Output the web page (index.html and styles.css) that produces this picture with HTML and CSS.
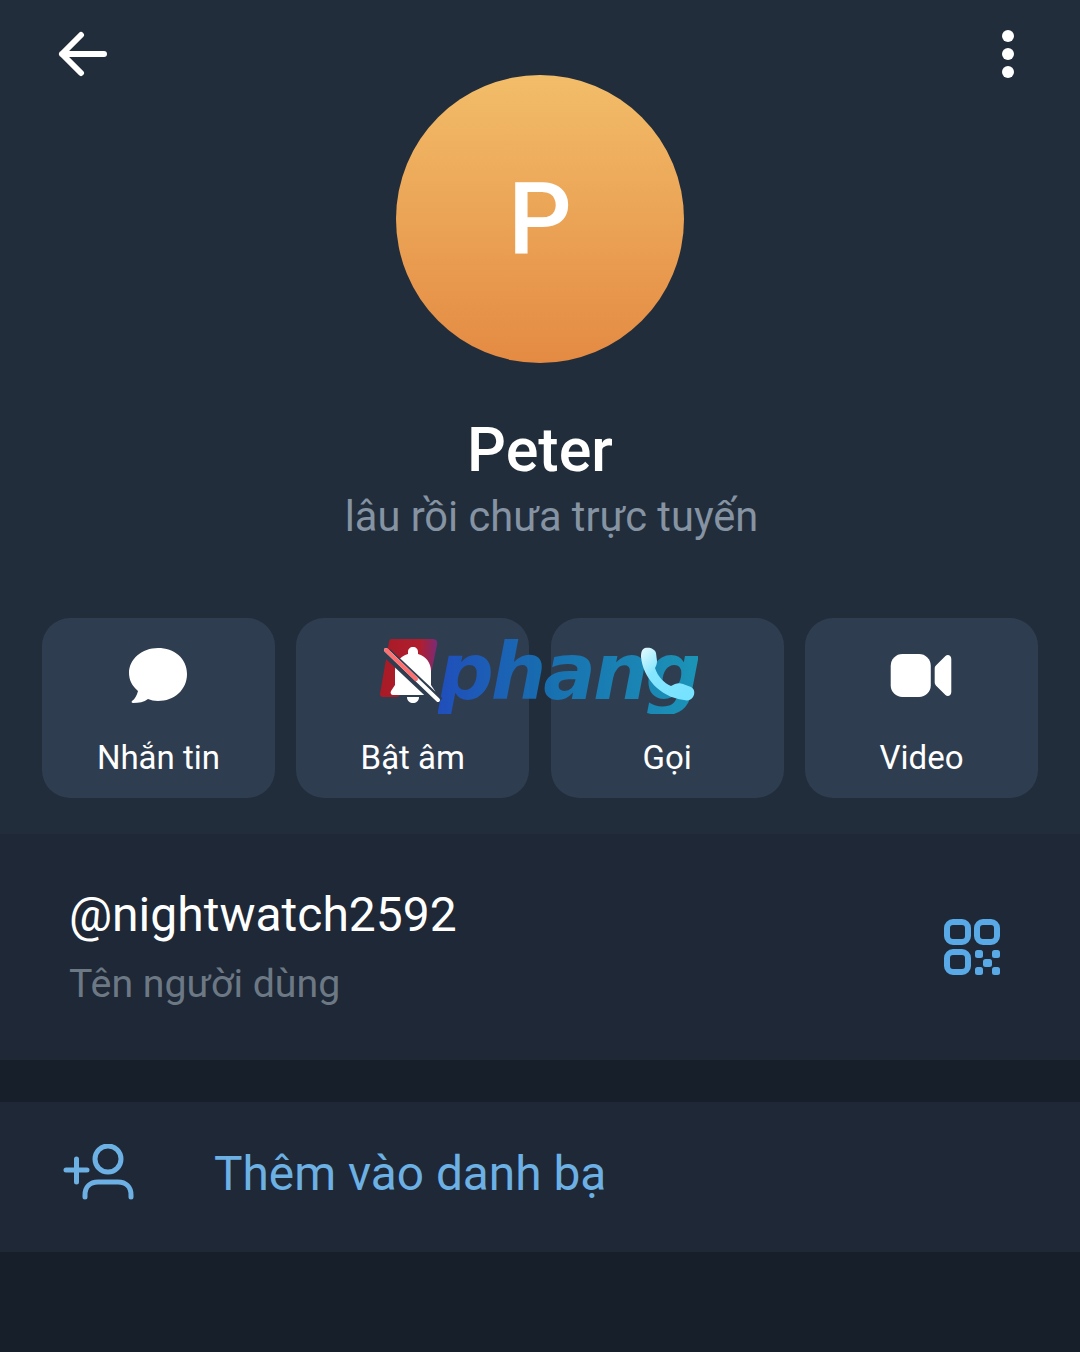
FILE: index.html
```html
<!DOCTYPE html>
<html lang="vi">
<head>
<meta charset="UTF-8">
<meta name="viewport" content="width=device-width, initial-scale=1.0">
<title>Peter</title>
<link rel="stylesheet" href="styles.css">
</head>
<body>

<div class="hero">
    <div class="topbar">
        <svg class="icon-back" width="50" height="48" viewBox="0 0 50 48" fill="none" stroke="#fff" stroke-width="6" stroke-linecap="round" stroke-linejoin="round">
            <path d="M46 24H4M23 5L4 24l19 19"/>
        </svg>
        <svg class="icon-more" width="14" height="50" viewBox="0 0 14 50" fill="#fff">
            <circle cx="7" cy="6" r="6"/>
            <circle cx="7" cy="24" r="6"/>
            <circle cx="7" cy="42" r="6"/>
        </svg>
    </div>
    <div class="avatar">P</div>
    <div class="name">Peter</div>
    <div class="status">lâu rồi chưa trực tuyến</div>
    <div class="actions">
        <div class="action">
            <svg width="60" height="56" viewBox="0 0 60 56" fill="#fff">
                <path d="M30 1C14 1 1 12 1 26c0 7 3 13 9 18-1 4-3 8-6 10-1 1 0 2 1 2 6 0 11-1 15-4 3 1 6 2 10 2 16 0 29-11 29-27S46 1 30 1z"/>
            </svg>
            <span class="action-label">Nhắn tin</span>
        </div>
        <div class="action">
            <svg width="60" height="60" viewBox="0 0 60 60" fill="#fff">
                <path d="M30 0c-3 0-5 2-5 5v2c-8 2-13 9-13 17v14l-4 6c-1 2 0 4 2 4h40c2 0 3-2 2-4l-4-6V24c0-8-5-15-13-17V5c0-3-2-5-5-5z"/>
                <path d="M24 50c0 4 3 6 6 6s6-2 6-6z"/>
                <path d="M4 6l52 49" stroke="#2f3d50" stroke-width="10"/>
                <path d="M3 3l52 50" stroke="#fff" stroke-width="4" stroke-linecap="round"/>
                <path d="M3 3l30 29" stroke="#ff6f6f" stroke-width="4" stroke-linecap="round"/>
            </svg>
            <span class="action-label">Bật âm</span>
        </div>
        <div class="action">
            <svg width="60" height="56" viewBox="0 0 60 56">
                <defs>
                    <linearGradient id="phone-fill" x1="0" y1="0" x2="1" y2="1">
                        <stop offset="0" stop-color="#e8fbff"/>
                        <stop offset="0.35" stop-color="#86e6ff"/>
                        <stop offset="1" stop-color="#74e2ff"/>
                    </linearGradient>
                </defs>
                <path fill="url(#phone-fill)" d="M8 1c5-1 10 1 11 5l1 8c0 3-1 5-2 7 3 9 9 15 16 18l4-2c3-1 5-1 8 0l8 3c4 2 4 7 2 10-2 3-5 4-9 3C22 50 6 30 4 10 4 5 5 2 8 1z"/>
            </svg>
            <span class="action-label">Gọi</span>
        </div>
        <div class="action">
            <svg class="icon-video" width="62" height="43" viewBox="0 0 62 44" fill="#fff">
                <rect x="0" y="0" width="41" height="44" rx="12"/>
                <path d="M45 15c0-2 1-3 2-4l9-9c2-2 6-1 6 3v34c0 4-4 5-6 3l-9-9c-1-1-2-2-2-4z"/>
            </svg>
            <span class="action-label">Video</span>
        </div>
    </div>
    <div class="watermark">
        <svg class="watermark-mark" width="58" height="60" viewBox="0 0 58 60">
            <defs>
                <linearGradient id="mark-fill" x1="0" y1="0" x2="1" y2="0">
                    <stop offset="0" stop-color="#a81a26"/>
                    <stop offset="0.7" stop-color="#b01e2e"/>
                    <stop offset="1" stop-color="#7a2a78"/>
                </linearGradient>
            </defs>
            <path fill="url(#mark-fill)" d="M12 1h40c4 0 6 2 5 6l-5 24c-1 3-3 5-7 5H24l-4 20c0 2-2 3-4 3H3c-2 0-3-1-3-3L9 4c0-2 1-3 3-3z"/>
        </svg>
        <span class="watermark-text">phang</span>
    </div>
</div>

<div class="section section-user">
    <div>
        <div class="username">@nightwatch2592</div>
        <div class="username-hint">Tên người dùng</div>
    </div>
    <svg class="icon-qr" width="56" height="56" viewBox="0 0 56 56" fill="none" stroke="#58a9e6" stroke-width="6">
        <rect x="3" y="3" width="21" height="20" rx="6"/>
        <rect x="33" y="3" width="20" height="20" rx="6"/>
        <rect x="3" y="33" width="21" height="20" rx="6"/>
        <g fill="#58a9e6" stroke="none">
            <rect x="31" y="31" width="8" height="8" rx="2.5"/>
            <rect x="48" y="31" width="8" height="8" rx="2.5"/>
            <rect x="39" y="40" width="9" height="8" rx="2.5"/>
            <rect x="31" y="48" width="8" height="8" rx="2.5"/>
            <rect x="48" y="48" width="8" height="8" rx="2.5"/>
        </g>
    </svg>
</div>

<div class="section section-add">
    <svg class="icon-add" width="72" height="56" viewBox="0 0 72 56" fill="none" stroke="#6cb0e4" stroke-width="5" stroke-linecap="round">
        <circle cx="45" cy="15" r="13"/>
        <path d="M22 53v-2c0-8 5-13 13-13h20c8 0 13 5 13 13v2"/>
        <path d="M3 26h21M13.500 15v23"/>
    </svg>
    <span class="add-label">Thêm vào danh bạ</span>
</div>

</body>
</html>
```

FILE: styles.css
```css
body {
    margin: 0;
    font-family: Roboto, sans-serif;
    background-color: #17202a;
    color: #fff;
    height: 1352px;
    overflow: hidden;
}
.hero {
    position: relative;
    height: 834px;
    background-color: #212d3b;
    box-sizing: border-box;
    padding: 0 42px;
    display: flex;
    flex-direction: column;
    align-items: center;
}
.topbar {
    align-self: stretch;
    height: 108px;
    margin: 0 -42px;
    padding: 30px 65px 0 58px;
    box-sizing: border-box;
    display: flex;
    justify-content: space-between;
    align-items: flex-start;
}
.avatar {
    width: 288px;
    height: 288px;
    margin-top: -33px;
    border-radius: 50%;
    background: linear-gradient(180deg, #f2bd69, #e48a43);
    display: flex;
    align-items: center;
    justify-content: center;
    font-size: 100px;
    font-weight: 500;
}
.name {
    margin-top: 52px;
    font-size: 61px;
    line-height: 70px;
    font-weight: 500;
}
.status {
    margin-top: 7px;
    padding-left: 23px;
    font-size: 41.6px;
    line-height: 50px;
    color: #8593a3;
}
.actions {
    align-self: stretch;
    margin-top: 76px;
    display: grid;
    grid-template-columns: repeat(4, 1fr);
    gap: 21.5px;
}
.action {
    height: 180px;
    border-radius: 28px;
    background-color: #2f3d50;
    display: flex;
    flex-direction: column;
    align-items: center;
    position: relative;
    padding-top: 29px;
    box-sizing: border-box;
}
.action svg {
    position: relative;
    z-index: 2;
    flex: none;
}
.action .icon-video {
    margin: 7px 2px 0 0;
}
.action-label {
    position: absolute;
    top: 120px;
    font-size: 33px;
    line-height: 40px;
}
.watermark {
    position: absolute;
    z-index: 1;
    left: 380px;
    top: 630px;
    display: flex;
    align-items: flex-start;
    font-style: italic;
    font-weight: 700;
    font-family: "DejaVu Sans", sans-serif;
    pointer-events: none;
}
.watermark-mark {
    flex: none;
    margin-top: 8px;
}
.watermark-text {
    margin-left: 0;
    font-size: 78px;
    line-height: 84px;
    letter-spacing: -3px;
    background: linear-gradient(90deg, #1f50c4, #1773b9 40%, #1a9cc0);
    -webkit-background-clip: text;
    background-clip: text;
    color: transparent;
    opacity: 0.92;
}
.section {
    background-color: #1e2836;
    display: flex;
    align-items: center;
}
.section-user {
    height: 226px;
    padding: 0 80px 0 69px;
    justify-content: space-between;
}
.username {
    margin-top: -1px;
    font-size: 48px;
    line-height: 56px;
    color: #fff;
}
.username-hint {
    margin-top: 18px;
    font-size: 39.3px;
    line-height: 46px;
    color: #6d7885;
}
.section-add {
    height: 150px;
    margin-top: 42px;
    padding: 0 0 6px 63px;
    box-sizing: border-box;
}
.icon-add {
    margin-bottom: 4px;
}
.add-label {
    margin-left: 79px;
    font-size: 47.8px;
    color: #6cb0e4;
}
```
